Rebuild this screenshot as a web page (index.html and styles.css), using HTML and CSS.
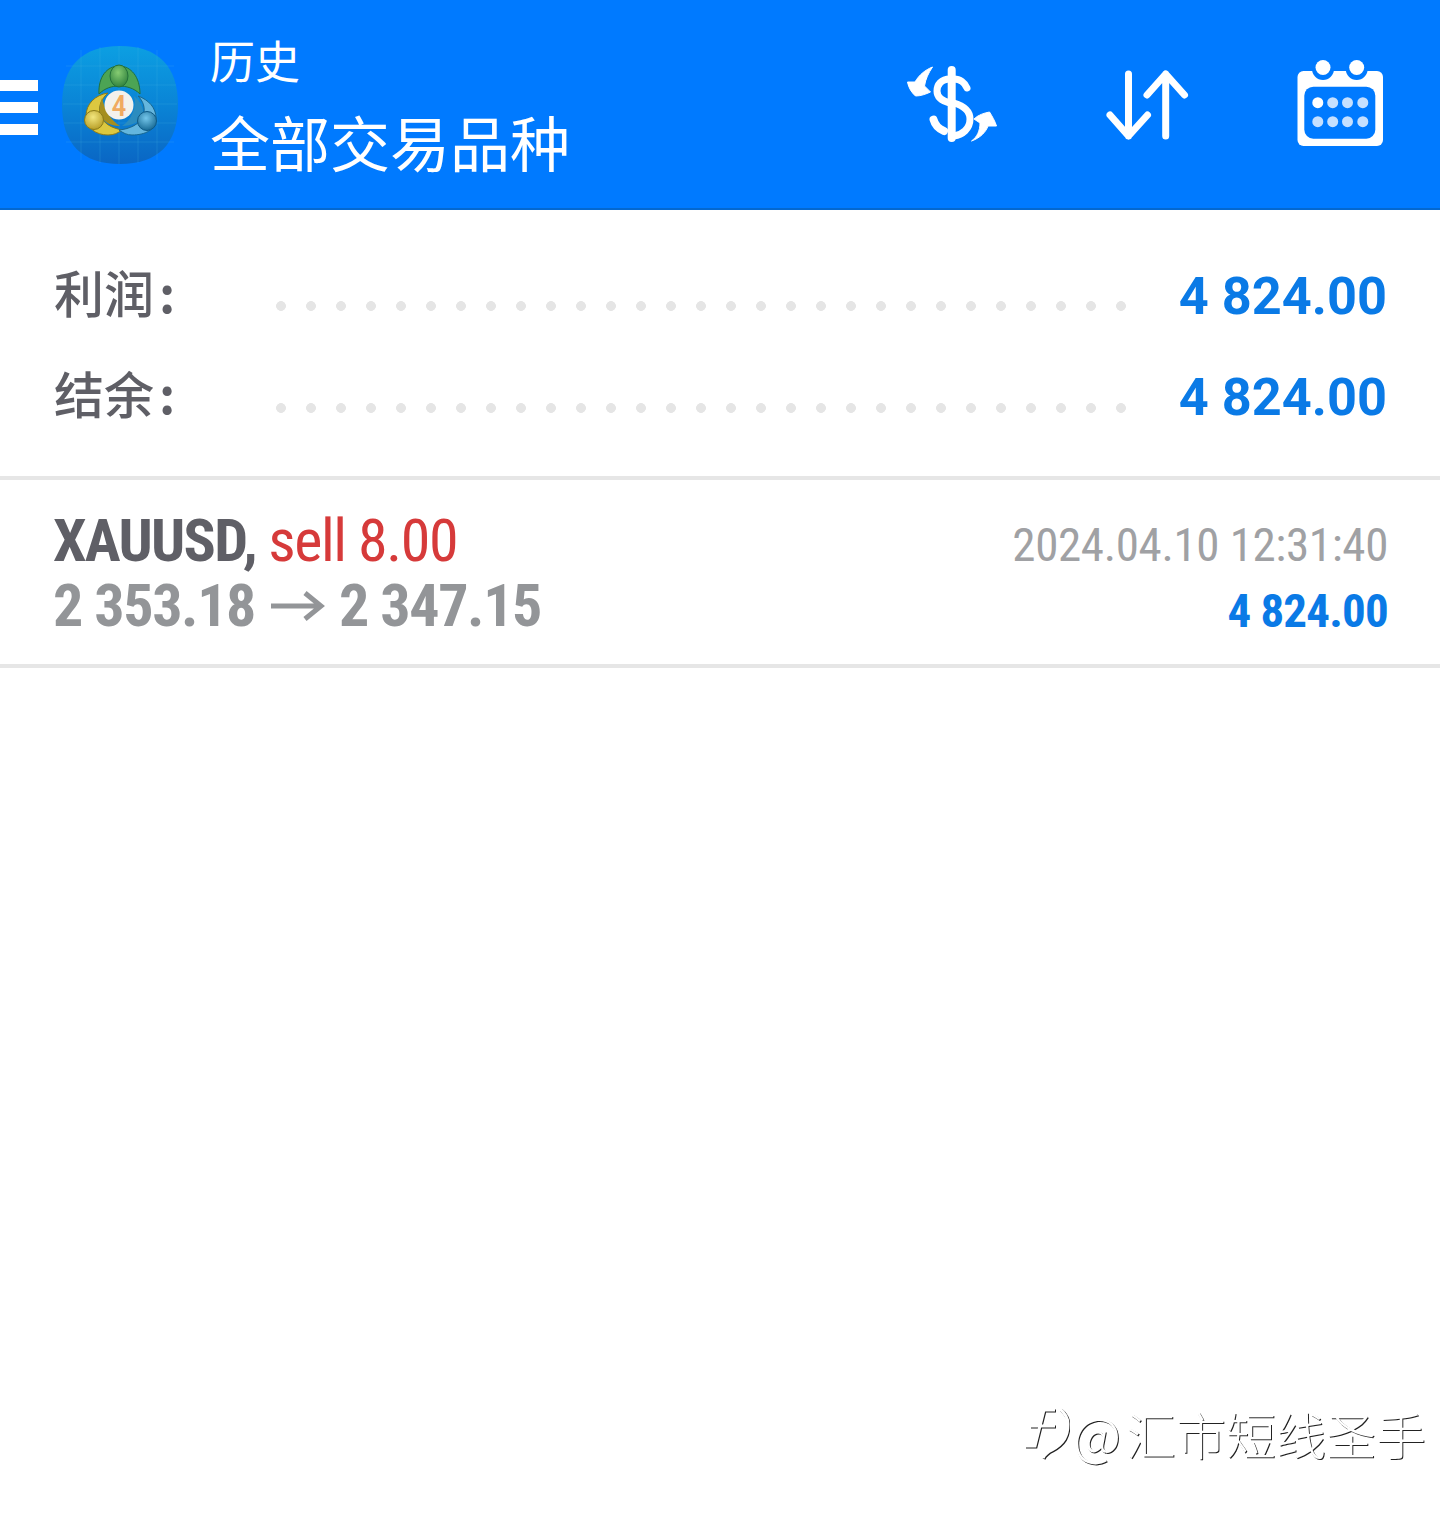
FILE: index.html
```html
<!DOCTYPE html>
<html lang="zh">
<head>
    <meta charset="UTF-8">
    <meta name="viewport" content="width=device-width, initial-scale=1.0">
    <title>历史</title>
    <link rel="stylesheet" href="styles.css">
</head>
<body>
    <div class="header">
        <div class="menu">
            <span></span>
            <span></span>
            <span></span>
        </div>
        <svg class="logo" viewBox="0 0 116 118">
            <defs>
                <linearGradient id="tile" x1="0" y1="0" x2="0" y2="1">
                    <stop offset="0" stop-color="#0c9fe2"/>
                    <stop offset="0.5" stop-color="#0a84d6"/>
                    <stop offset="1" stop-color="#0a66c4"/>
                </linearGradient>
                <radialGradient id="green" cx="0.45" cy="0.35" r="0.7">
                    <stop offset="0" stop-color="#86cc72"/>
                    <stop offset="1" stop-color="#2c7f3c"/>
                </radialGradient>
                <radialGradient id="yellow" cx="0.45" cy="0.35" r="0.7">
                    <stop offset="0" stop-color="#f2e67e"/>
                    <stop offset="1" stop-color="#b49a22"/>
                </radialGradient>
                <radialGradient id="blue" cx="0.45" cy="0.35" r="0.7">
                    <stop offset="0" stop-color="#74c6ea"/>
                    <stop offset="1" stop-color="#12648f"/>
                </radialGradient>
            </defs>
            <path d="M58 0C96 0 116 20 116 59C116 98 96 118 58 118C20 118 0 98 0 59C0 20 20 0 58 0Z" fill="url(#tile)"/>
            <path d="M4 20H112M2 39H114M1 58H115M2 77H114M4 96H112M19 4V114M38 1V117M57 0V118M76 1V117M95 4V114" stroke="#4fb6ea" stroke-opacity="0.22" fill="none"/>
            <path d="M37 48C36 31 45 20 57 20C69 20 78 31 78 48C72 42 64 40 57 40C50 40 43 42 37 48Z" fill="#4ca454" stroke="#23703a"/>
            <path d="M46 47C33 49 24 58 24 70C24 82 34 89 46 89C52 89 56 87 60 84C50 82 41 78 38 68C36 60 40 52 46 47Z" fill="#dcc840" stroke="#8a7a18"/>
            <path d="M76 50C87 54 94 62 94 72C94 84 83 89 70 89C65 89 61 87 57 84C68 83 78 78 81 70C84 62 81 55 76 50Z" fill="#64b6de" stroke="#17668f"/>
            <path d="M40 52C42 62 48 74 58 80C48 80 41 76 38 68C37 62 38 57 40 52Z" fill="#a58e1e"/>
            <path d="M72 50C75 60 70 74 60 80C70 80 78 76 81 68C82 62 78 55 72 50Z" fill="#2b8cbf"/>
            <ellipse cx="57" cy="30" rx="9" ry="11" fill="url(#green)" stroke="#23703a"/>
            <circle cx="32" cy="74" r="9.5" fill="url(#yellow)" stroke="#8a7a18"/>
            <circle cx="85" cy="75" r="9.5" fill="url(#blue)" stroke="#0e5a86"/>
            <circle cx="57" cy="59" r="14.5" fill="#f3f1ec"/>
            <text class="logo-num" x="57" y="70" text-anchor="middle">4</text>
        </svg>
        <div class="titles">
            <div class="title-small">历史</div>
            <div class="title-big">全部交易品种</div>
        </div>
        <div class="actions">
            <svg class="icon-dollar" viewBox="0 0 105 90">
                <path d="M32.5 8C25 11 19 16 15 23L7.5 23C8.5 29 12 34 15.5 37C21 37 26 35 30.5 33L24.5 27C25.5 20 28.5 14 32.5 8Z" fill="#fff" stroke="#fff" stroke-linejoin="round"/>
                <path d="M71.5 82C77 78 80 72 80 64L74 60C78 56 84 54 89.5 53C92 57 95 62 96.5 67L88 67C86 73 80 79 71.5 82Z" fill="#fff" stroke="#fff" stroke-linejoin="round"/>
                <path d="M50 20C41 20 37 26 37 32C37 38 42 42 50 44M54 20C60 20 65 24 67 29M54 44C64 47 70 52 70 60C70 70 62 76 54 77" fill="none" stroke="#fff" stroke-width="7" stroke-linecap="round"/>
                <path d="M33.5 60.5C35 66 39 70 44 72" fill="none" stroke="#fff" stroke-width="8" stroke-linecap="round"/>
                <path d="M51.7 11V79" stroke="#fff" stroke-width="8" stroke-linecap="round"/>
            </svg>
            <svg class="icon-sort" viewBox="0 0 90 72">
                <path d="M26.5 6V68M8 47L26.5 68L45.5 47" fill="none" stroke="#fff" stroke-width="7" stroke-linecap="round" stroke-linejoin="round"/>
                <path d="M63.7 68V6M45 27L63.7 6L82.5 27" fill="none" stroke="#fff" stroke-width="7" stroke-linecap="round" stroke-linejoin="round"/>
            </svg>
            <svg class="icon-cal" viewBox="0 0 88 88">
                <rect x="1.5" y="11" width="85.5" height="75" rx="6" fill="#fff"/>
                <circle cx="27" cy="9" r="11" fill="#007aff"/>
                <circle cx="60.7" cy="9" r="11" fill="#007aff"/>
                <circle cx="27" cy="7.5" r="7.5" fill="#fff"/>
                <circle cx="60.7" cy="7.5" r="7.5" fill="#fff"/>
                <rect x="8.3" y="26.7" width="71" height="52" rx="9" fill="#007aff"/>
                <circle cx="21.8" cy="42.7" r="5.5" fill="#fff"/>
                <circle cx="36.7" cy="42.7" r="5.5" fill="#c6e0ff"/>
                <circle cx="51.5" cy="42.7" r="5.5" fill="#c6e0ff"/>
                <circle cx="66.8" cy="42.7" r="5.5" fill="#c6e0ff"/>
                <circle cx="21.8" cy="61.7" r="5.5" fill="#c6e0ff"/>
                <circle cx="36.7" cy="61.7" r="5.5" fill="#c6e0ff"/>
                <circle cx="51.5" cy="61.7" r="5.5" fill="#c6e0ff"/>
                <circle cx="66.8" cy="61.7" r="5.5" fill="#c6e0ff"/>
            </svg>
        </div>
    </div>

    <div class="summary">
        <div class="sum-row">
            <span class="sum-label">利润<i>:</i></span>
            <span class="dots"></span>
            <span class="sum-value">4 824.00</span>
        </div>
        <div class="sum-row">
            <span class="sum-label">结余<i>:</i></span>
            <span class="dots"></span>
            <span class="sum-value">4 824.00</span>
        </div>
    </div>

    <div class="trade">
        <div class="trade-left">
            <div class="cond line-top"><b class="symbol">XAUUSD,</b> <span class="sell">sell 8.00</span></div>
            <div class="cond line-price">
                <span>2 353.18</span>
                <svg class="arrow" viewBox="0 0 55 30">
                    <path d="M0 15H50M34 2L50 15L34 28" fill="none" stroke="#939598" stroke-width="5"/>
                </svg>
                <span>2 347.15</span>
            </div>
        </div>
        <div class="trade-right">
            <div class="cond line-date">2024.04.10 12:31:40</div>
            <div class="cond line-profit">4 824.00</div>
        </div>
    </div>

    <div class="watermark">
        <svg class="wm-icon" viewBox="0 0 50 58">
            <path class="wm-shadow" d="M35 6H24L15 42H5M10 22H35M40 5C46 10 48 14 48 20C48 32 44 39 32 46C28 48 25 50 23 54"/>
            <path class="wm-face" d="M35 6H24L15 42H5M10 22H35M40 5C46 10 48 14 48 20C48 32 44 39 32 46C28 48 25 50 23 54"/>
        </svg>
        <span class="wm-at">@</span>
        <span>汇市短线圣手</span>
    </div>
</body>
</html>
```

FILE: styles.css
```css
* {
    box-sizing: border-box;
}
body {
    margin: 0;
    padding: 0;
    height: 1514px;
    background-color: #fff;
    font-family: "Noto Sans CJK SC", "Noto Sans", sans-serif;
    overflow: hidden;
    position: relative;
}
.header {
    height: 210px;
    background-color: #007aff;
    border-bottom: 2px solid #0468cf;
    display: flex;
    align-items: center;
    color: #fff;
}
.menu {
    width: 38px;
    height: 55px;
    margin-top: 7px;
    display: flex;
    flex-direction: column;
    justify-content: space-between;
}
.menu span {
    display: block;
    height: 11px;
    background-color: #fff;
}
.logo {
    width: 116px;
    height: 118px;
    margin-left: 24px;
    margin-top: 1px;
}
.logo-num {
    font-family: "Roboto", sans-serif;
    font-weight: 500;
    font-size: 30px;
    font-stretch: 75%;
    fill: #f0aa60;
}
.titles {
    margin-left: 32px;
    margin-top: 2px;
}
.title-small {
    font-size: 45px;
    line-height: 60px;
}
.title-big {
    font-size: 60px;
    line-height: 80px;
    margin-top: 11px;
}
.actions {
    margin-left: auto;
    margin-right: 56px;
    display: flex;
    align-items: center;
}
.icon-dollar {
    width: 105px;
    height: 90px;
}
.icon-sort {
    width: 90px;
    height: 72px;
    margin-left: 97px;
}
.icon-cal {
    width: 88px;
    height: 88px;
    margin-left: 104px;
}
.summary {
    padding: 35px 53px 0 54px;
    height: 270px;
    border-bottom: 4px solid #e6e6e6;
}
.sum-row {
    height: 101.5px;
    display: flex;
    align-items: center;
}
.sum-label {
    width: 212px;
    font-size: 50px;
    font-weight: 500;
    color: #5f5f66;
    padding-bottom: 10px;
}
.sum-label i {
    font-style: normal;
    font-weight: 700;
    margin-left: 5px;
}
.dots {
    width: 870px;
    height: 12px;
    margin-top: 21px;
    background: radial-gradient(circle, #e5e5e5 4.6px, transparent 5.2px) 0 0 / 30px 12px repeat-x;
}
.sum-value {
    margin-left: auto;
    font-family: "Roboto", sans-serif;
    font-weight: 700;
    font-size: 52.3px;
    color: #0a7ae6;
}
.trade {
    height: 188px;
    padding: 28px 52px 0 53px;
    border-bottom: 4px solid #e6e6e6;
    display: flex;
    justify-content: space-between;
}
.cond {
    font-family: "Roboto", sans-serif;
    font-stretch: 75%;
    white-space: nowrap;
}
.line-top {
    font-size: 60px;
    line-height: 66px;
    letter-spacing: -1.4px;
}
.symbol {
    color: #5f5f66;
    letter-spacing: -1.7px;
}
.sell {
    color: #d63a3a;
}
.line-price {
    display: flex;
    align-items: center;
    font-size: 60px;
    line-height: 64px;
    font-weight: 700;
    letter-spacing: -1.4px;
    color: #939598;
}
.arrow {
    width: 55px;
    height: 30px;
    margin: 0 13px 0 16px;
}
.trade-right {
    text-align: right;
    padding-top: 4px;
}
.line-date {
    font-size: 47px;
    line-height: 66px;
    letter-spacing: -0.35px;
    color: #a0a1a4;
}
.line-profit {
    font-size: 47px;
    line-height: 65px;
    font-weight: 700;
    letter-spacing: -0.8px;
    color: #0a7ae6;
}
.watermark {
    position: absolute;
    right: 14px;
    top: 1395px;
    display: flex;
    align-items: center;
    font-size: 50px;
    font-weight: 300;
    color: #fff;
    text-shadow: 1px 1px 0 #222;
}
.wm-icon {
    width: 50px;
    height: 58px;
    margin-right: 3px;
}
.wm-icon path {
    fill: none;
    stroke-width: 3;
}
.wm-shadow {
    stroke: #222;
    transform: translate(1px, 1px);
}
.wm-face {
    stroke: #fff;
}
.wm-at {
    font-size: 53px;
    margin-right: 5px;
}
```
